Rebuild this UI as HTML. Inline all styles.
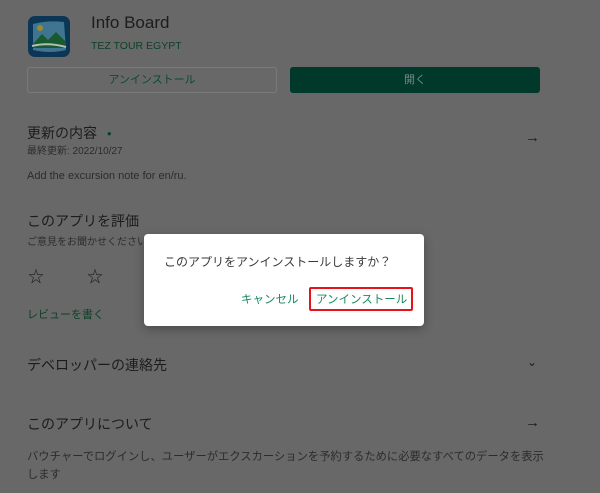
<!DOCTYPE html>
<html><head><meta charset="utf-8"><style>
body{margin:0;width:600px;height:493px;background:#686868;font-family:"Liberation Sans","Noto Sans CJK JP",sans-serif;position:relative;overflow:hidden;color:#1c1c1c}
.a{position:absolute;white-space:nowrap}
.s{color:#2c2c2c}
.g{color:#0c4128}
</style></head><body>
<svg class="a" style="left:28px;top:16px" width="42" height="41" viewBox="0 0 42 41">
<rect width="42" height="41" rx="7" fill="#0b3656"/>
<path d="M5 8 Q20 4 36 6 L38 34 Q22 38 5 34 Z" fill="#3f7590"/>
<circle cx="12" cy="12" r="3" fill="#9a8a32"/>
<path d="M5 28 L14 18 L20 24 L28 16 L38 26 L38 32 L5 32 Z" fill="#175a2e"/>
<path d="M4 30 Q20 26 38 31" stroke="#b4bcc0" stroke-width="2" fill="none"/>
</svg>
<div class="a" style="left:91px;top:13px;font-size:17px">Info Board</div>
<div class="a g" style="left:91px;top:40px;font-size:10.5px">TEZ TOUR EGYPT</div>
<div class="a" style="left:27px;top:67px;width:248px;height:24px;border:1px solid #7a7a7a;border-radius:3px;text-align:center;line-height:24px;font-size:11px;color:#0d4a2e">アンインストール</div>
<div class="a" style="left:290px;top:67px;width:250px;height:26px;background:#00382a;border-radius:3px;text-align:center;line-height:26px;font-size:11px;color:#6f8a7f">開く</div>
<div class="a" style="left:27px;top:123px;font-size:14px">更新の内容 <span class="g" style="font-size:8px;margin-left:6px;vertical-align:2px">●</span></div>
<div class="a s" style="left:27px;top:142px;font-size:10px">最終更新: 2022/10/27</div>
<div class="a" style="left:525px;top:129px;font-size:15px">→</div>
<div class="a s" style="left:27px;top:170px;font-size:11px">Add the excursion note for en/ru.</div>
<div class="a" style="left:27px;top:211px;font-size:14px">このアプリを評価</div>
<div class="a s" style="left:27px;top:233px;font-size:10px">ご意見をお聞かせください</div>
<div class="a" style="left:28px;top:263px;font-size:16px">☆</div>
<div class="a" style="left:87px;top:263px;font-size:16px">☆</div>
<div class="a g" style="left:27px;top:306px;font-size:11px">レビューを書く</div>
<div class="a" style="left:27px;top:355px;font-size:14px">デベロッパーの連絡先</div>
<div class="a" style="left:527px;top:355px;font-size:12px">⌄</div>
<div class="a" style="left:27px;top:414px;font-size:14px">このアプリについて</div>
<div class="a" style="left:525px;top:414px;font-size:15px">→</div>
<div class="a s" style="left:27px;top:448px;font-size:11.3px">バウチャーでログインし、ユーザーがエクスカーションを予約するために必要なすべてのデータを表示</div>
<div class="a s" style="left:27px;top:466px;font-size:11.3px">します</div>
<div class="a" style="left:144px;top:234px;width:280px;height:92px;background:#fff;border-radius:4px;box-shadow:0 3px 10px rgba(0,0,0,.3)"></div>
<div class="a" style="left:164px;top:253px;font-size:12px;color:#3a3a3a">このアプリをアンインストールしますか？</div>
<div class="a" style="left:241px;top:291px;font-size:11.5px;color:#1a8a5e">キャンセル</div>
<div class="a" style="left:309px;top:287px;width:100px;height:20px;border:2px solid #e8121b;border-radius:2px"></div>
<div class="a" style="left:316px;top:291px;font-size:11.5px;color:#1a8a5e">アンインストール</div>
</body></html>
